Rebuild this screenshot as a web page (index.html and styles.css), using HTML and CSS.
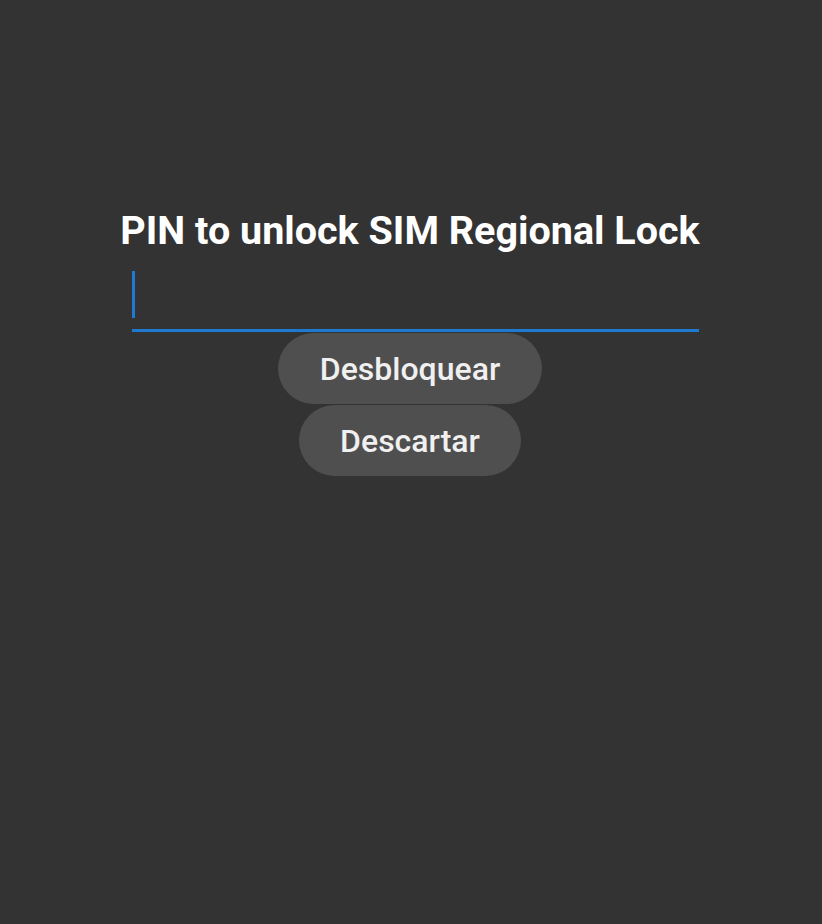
FILE: index.html
```html
<!DOCTYPE html>
<html lang="en">
<head>
    <meta charset="UTF-8">
    <meta name="viewport" content="width=device-width, initial-scale=1.0">
    <title>SIM Regional Lock</title>
    <link rel="stylesheet" href="styles.css">
</head>
<body>
    <div class="dialog">
        <h1 class="title">PIN to unlock SIM Regional Lock</h1>

        <div class="pin-field">
            <span class="cursor"></span>
        </div>

        <div class="actions">
            <button class="pill">Desbloquear</button>
            <button class="pill">Descartar</button>
        </div>
    </div>
</body>
</html>
```

FILE: styles.css
```css
html,
body {
    height: 100%;
}

body {
    margin: 0;
    background-color: #333333;
    font-family: Roboto, "Liberation Sans", sans-serif;
    color: #ffffff;
}

.dialog {
    width: 580px;
    margin: 0 auto;
    padding: 206px 2px 0 0;
    display: flex;
    flex-direction: column;
    align-items: center;
}

.title {
    margin: 0;
    font-size: 39.5px;
    font-weight: 700;
    line-height: 50px;
    white-space: nowrap;
}

.pin-field {
    align-self: stretch;
    margin: 15px 1px 0 12px;
    height: 58px;
    border-bottom: 3px solid #1e7ad0;
    display: flex;
    align-items: flex-start;
}

.cursor {
    display: block;
    width: 3px;
    height: 47px;
    background-color: #1e7ad0;
}

.actions {
    display: flex;
    flex-direction: column;
    align-items: center;
    gap: 1px;
    margin-top: 1px;
}

.pill {
    height: 71px;
    padding: 0 41.5px;
    border: none;
    border-radius: 36px;
    background-color: #4f4f4f;
    color: #f0f0f0;
    font-family: Roboto, "Liberation Sans", sans-serif;
    font-size: 32px;
    font-weight: 500;
    cursor: pointer;
}
```
